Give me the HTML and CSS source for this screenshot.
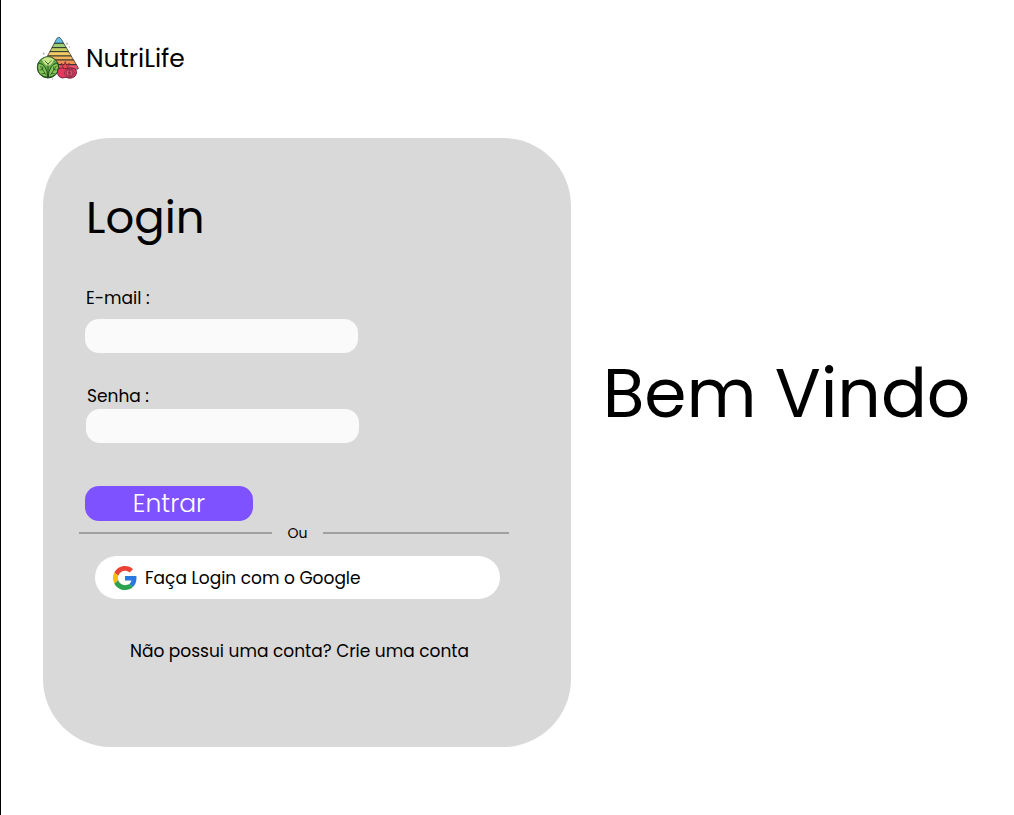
FILE: index.html
```html
<!DOCTYPE html>
<html lang="pt-BR">
<head>
<meta charset="utf-8">
<meta name="viewport" content="width=device-width, initial-scale=1">
<title>NutriLife</title>
<link rel="stylesheet" href="styles.css">
</head>
<body class="page">
<header class="brand">
  <svg class="brand-logo" viewBox="18 18 129 135" aria-hidden="true">
    <defs><clipPath id="pyramid"><path d="M86 22q5 0 8 6l50 84q4 6-4 6H38q-7 0-3-7l44-83q3-6 7-6z"/></clipPath></defs>
    <g clip-path="url(#pyramid)" stroke="#22262a" stroke-width="2.5">
      <path fill="#65bfe0" d="M20 18h130v22H20z"/>
      <path fill="#9bcd72" d="M20 40h130v13H20z"/>
      <path fill="#c6ce62" d="M20 53h130v12H20z"/>
      <path fill="#efca65" d="M20 65h130v13H20z"/>
      <path fill="#f2b65a" d="M20 78h130v12H20z"/>
      <path fill="#ee9251" d="M20 90h130v14H20z"/>
      <path fill="#e2536b" d="M20 104h130v18H20z"/>
    </g>
    <path fill="none" stroke="#22262a" stroke-width="2" d="M86 22q5 0 8 6l50 84q4 6-4 6H38q-7 0-3-7l44-83q3-6 7-6z"/>
    <circle cx="54" cy="112" r="32" fill="#62ad42" stroke="#183a1d" stroke-width="2.5"/>
    <path fill="#c8e88a" stroke="#285b27" stroke-width="1.5" d="M34 89q20-18 40 0-5 14-20 22-15-8-20-22z"/>
    <path fill="#82c653" stroke="#183a1d" stroke-width="2.5" d="M25 99q25 3 29 43-23-3-29-18-5-12 0-25zM83 99q-25 3-29 43 23-3 29-18 5-12 0-25z"/>
    <path fill="none" stroke="#183a1d" stroke-width="2" d="M54 100v42M31 108l18 28M79 108l-18 28M38 119v-9M38 119l-9 1M45 130l-10 1M71 119v-9M71 119l9 1M64 130l10 1M44 92l10 10 11-10"/>
    <path fill="#e8375f" stroke="#571b32" stroke-width="2.5" d="M85 116q12-5 23 0 15-5 25 0 6 2 7 9 0 14-12 18-10 4-20-1-12 5-20-2-9-8-3-24z"/>
    <path fill="#e9474d" stroke="#571b32" stroke-width="2" d="M101 116l-7-16 8 5 4-10 3 10 9-5-7 16z"/>
    <ellipse cx="118" cy="129" rx="14" ry="12" fill="#f05b79" stroke="#571b32" stroke-width="2"/>
    <path fill="none" stroke="#721c39" stroke-width="2" d="M109 124q9-9 18 0v10q-9 8-18 0zM113 127h10M115 131h8M118 120v18"/>
    <path fill="none" stroke="#a5ada1" stroke-width="2" d="M111 37v8M107 41h8M118 48v6M38 71h7M41 67v8M67 146v4"/>
  </svg>
  <span class="brand-name">NutriLife</span>
</header>
<main class="layout">
  <section class="card">
    <h1 class="card-title">Login</h1>
    <form class="form">
      <div class="field">
        <label class="label" for="email">E-mail :</label>
        <input class="input" id="email" type="email">
      </div>
      <div class="field field-password">
        <label class="label" for="senha">Senha :</label>
        <input class="input" id="senha" type="password">
      </div>
      <button class="submit" type="submit">Entrar</button>
    </form>
    <div class="alternatives">
      <div class="divider"><span class="divider-text">Ou</span></div>
      <button class="google" type="button">
        <svg class="google-logo" viewBox="0 0 48 48" aria-hidden="true">
          <path fill="#ea4335" d="M24 9.5c3.54 0 6.71 1.22 9.21 3.6l6.85-6.85C35.9 2.38 30.47 0 24 0 14.62 0 6.51 5.38 2.56 13.22l7.98 6.19C12.43 13.72 17.74 9.5 24 9.5z"/>
          <path fill="#2878df" d="M46.98 24.55c0-1.57-.15-3.09-.38-4.55H24v9.02h12.94c-.58 2.96-2.26 5.48-4.78 7.18l7.73 6c4.51-4.18 7.09-10.36 7.09-17.65z"/>
          <path fill="#fbbc05" d="M10.53 28.59A14.5 14.5 0 0 1 10.54 19.41l-7.98-6.19a24 24 0 0 0 0 21.56z"/>
          <path fill="#2ba24c" d="M24 48c6.48 0 11.93-2.13 15.89-5.81l-7.73-6c-2.15 1.45-4.92 2.3-8.16 2.3-6.26 0-11.57-4.22-13.47-9.91l-7.97 6.2C6.51 42.62 14.62 48 24 48z"/>
        </svg>
        Faça Login com o Google
      </button>
      <a class="signup" href="#cadastro">Não possui uma conta? Crie uma conta</a>
    </div>
  </section>
  <p class="welcome">Bem Vindo</p>
</main>
</body>
</html>
```

FILE: styles.css
```css
* {
  box-sizing: border-box;
}

.page {
  min-height: 100vh;
  margin: 0;
  padding: 36px 0 68px 35px;
  border-left: 1px solid #000;
  background: #fff;
  color: #000;
  font-family: Poppins, Inter, sans-serif;
  font-size: 17px;
  line-height: 24px;
}

.brand {
  display: flex;
  align-items: center;
  gap: 7px;
}

.brand-logo {
  width: 43px;
  height: 45px;
}

.brand-name {
  font-size: 25px;
}

.layout {
  display: flex;
  align-items: center;
  margin-top: 57px;
  padding-left: 7px;
}

.card {
  flex: 0 1 528px;
  padding: 52px 62px 84px 36px;
  border-radius: 68px;
  background: #d9d9d9;
}

.card-title {
  margin: 0 0 40px 7px;
  font-size: 45px;
  font-weight: 400;
  line-height: 56px;
}

.form {
  display: flex;
  flex-direction: column;
  align-items: flex-start;
  padding-left: 6px;
}

.field {
  display: flex;
  flex-direction: column;
  gap: 9px;
  width: 273px;
  max-width: 100%;
}

.field-password {
  gap: 1px;
  margin: 31px 0 43px 1px;
}

.label {
  padding-left: 1px;
}

.input {
  width: 100%;
  height: 34px;
  padding: 0 14px;
  border: 0;
  border-radius: 14px;
  background: #fafafa;
  font: inherit;
}

.submit {
  width: 168px;
  height: 35px;
  padding: 0;
  border: 0;
  border-radius: 14px;
  background: #7f52ff;
  color: #fff;
  font: inherit;
  font-size: 25px;
  font-weight: 300;
}

.alternatives {
  display: flex;
  flex-direction: column;
  margin-top: 2px;
}

.divider {
  display: grid;
  grid-template-columns: 193fr 51px 186fr;
  align-items: center;
  font-size: 14px;
  line-height: 20px;
}

.divider-text {
  text-align: center;
}

.divider::before,
.divider::after {
  content: "";
  height: 2px;
  background: #a0a0a0;
}

.google {
  display: flex;
  align-items: center;
  gap: 8px;
  height: 43px;
  margin: 13px 9px 0 16px;
  padding: 0 18px;
  border: 0;
  border-radius: 22px;
  background: #fff;
  color: #000;
  font: inherit;
}

.google-logo {
  width: 24px;
  height: 24px;
}

.signup {
  align-self: center;
  margin-top: 40px;
  padding-left: 11px;
  color: inherit;
  text-decoration: none;
}

.welcome {
  flex: 1;
  margin: 0 0 98px;
  padding-right: 12px;
  font-size: 68px;
  line-height: 80px;
  text-align: center;
  white-space: nowrap;
}
```
